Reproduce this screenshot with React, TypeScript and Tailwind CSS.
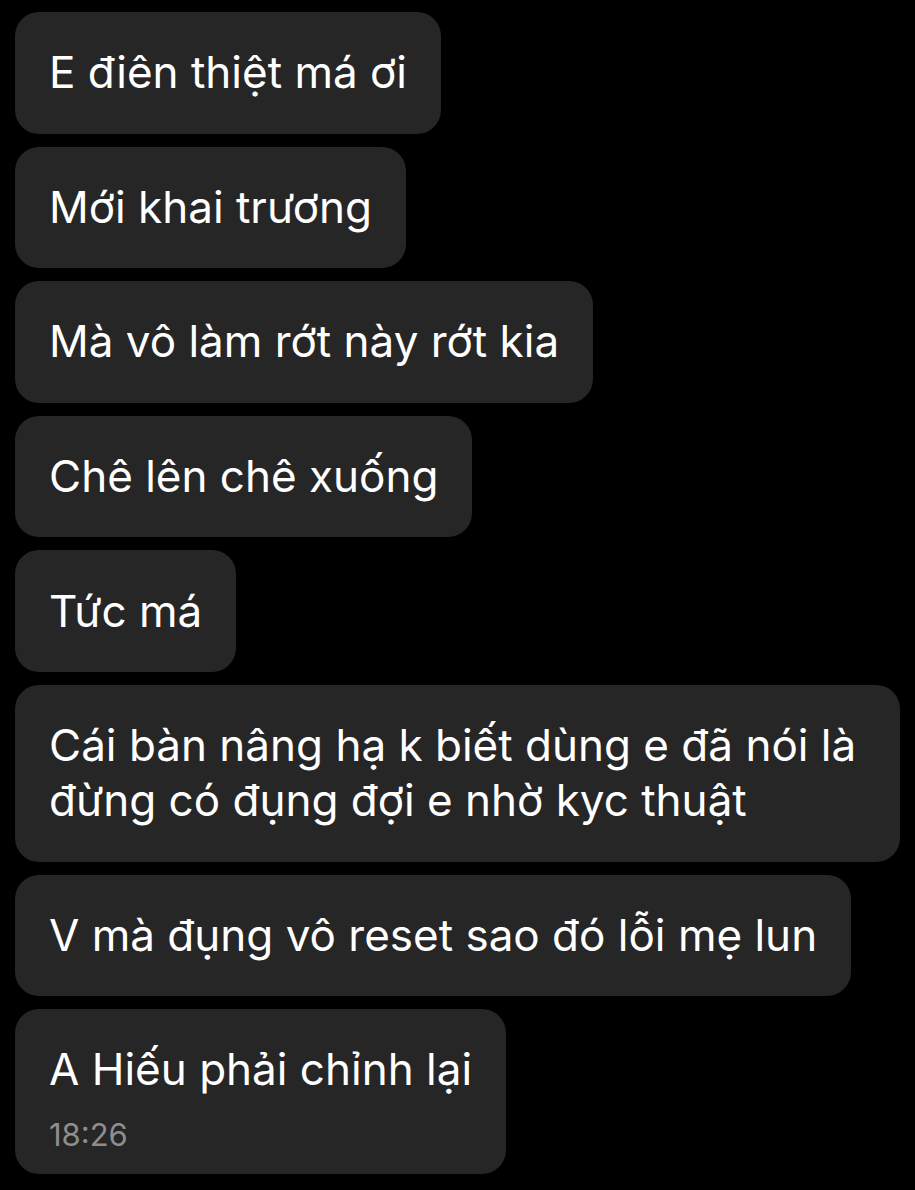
import React from "react";

const messages = [
  "E điên thiệt má ơi",
  "Mới khai trương",
  "Mà vô làm rớt này rớt kia",
  "Chê lên chê xuống",
  "Tức má",
  "Cái bàn nâng hạ k biết dùng e đã nói là đừng có đụng đợi e nhờ kyc thuật",
  "V mà đụng vô reset sao đó lỗi mẹ lun",
];

export default function App() {
  return (
    <div
      className="min-h-[1190px] w-[915px] bg-black pt-[12px] pl-[15px] pr-[15px]"
      style={{ fontFamily: "Inter, 'Liberation Sans', sans-serif" }}
    >
      <div className="flex flex-col items-start gap-[13px]">
        {messages.map((m, i) => (
          <div
            key={i}
            className="max-w-[885px] rounded-[24px] bg-[#262626] px-[34px] py-[33.3px] text-[44px] leading-[55px] text-white"
          >
            {m}
          </div>
        ))}

        {/* last bubble with time */}
        <div className="rounded-[24px] bg-[#262626] px-[34px] pt-[33.3px] pb-[23px] text-white">
          <div className="text-[44px] leading-[55px]">A Hiếu phải chỉnh lại</div>
          <div className="mt-[22px] text-[31px] leading-[32px] text-[#8e8e8e]">18:26</div>
        </div>
      </div>
    </div>
  );
}
